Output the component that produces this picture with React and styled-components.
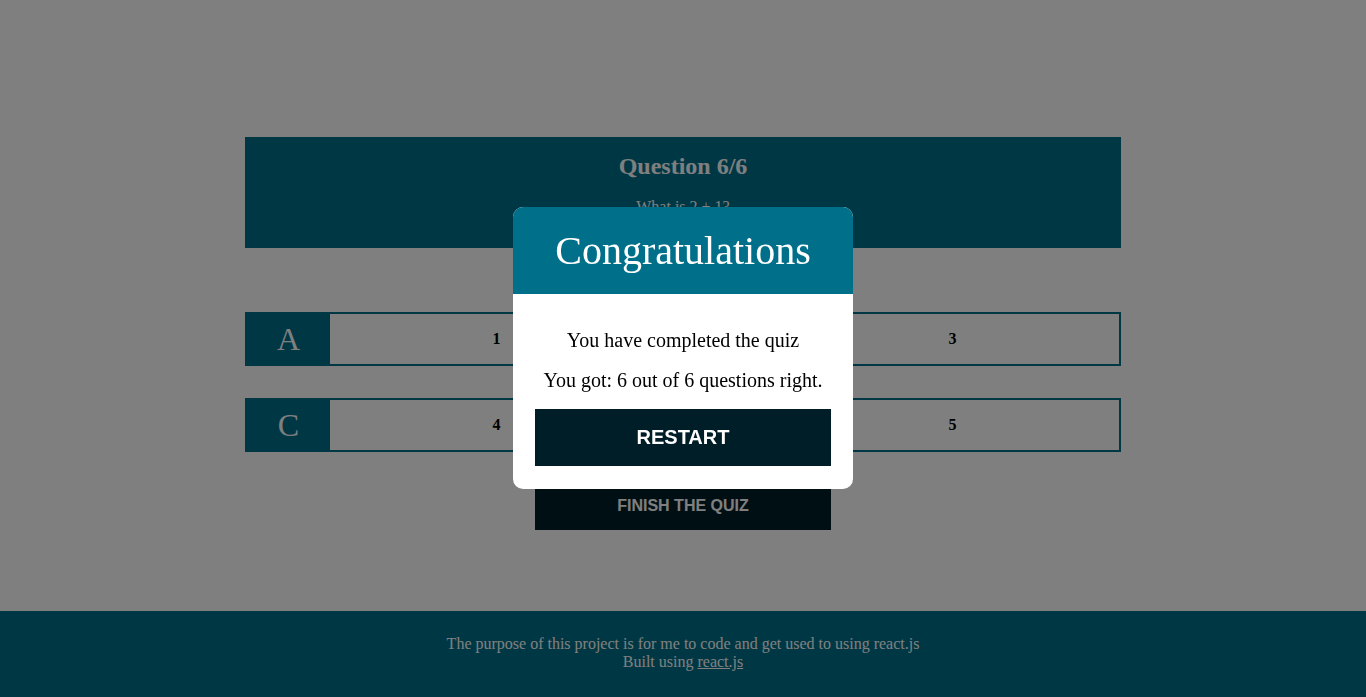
import styled, { createGlobalStyle } from 'styled-components';

const teal = '#006f89';

const GlobalStyle = createGlobalStyle`
  html, body {
    margin: 0;
    padding: 0;
    background: #ffffff;
    font-family: 'Liberation Serif', 'Times New Roman', serif;
  }
`;

const Page = styled.div`
  min-height: 697px;
  display: flex;
  flex-direction: column;
`;

const Main = styled.main`
  flex: 1;
  display: flex;
  flex-direction: column;
  align-items: center;
  padding-top: 137px;
`;

const QuestionBox = styled.section`
  width: 876px;
  height: 111px;
  box-sizing: border-box;
  background: ${teal};
  color: #ffffff;
  display: flex;
  flex-direction: column;
  align-items: center;
  padding-top: 15px;
`;

const QuestionTitle = styled.h2`
  margin: 0;
  font-size: 24px;
  line-height: 28px;
  font-weight: bold;
`;

const QuestionText = styled.p`
  margin: 18px 0 0;
  font-size: 16px;
  line-height: 18px;
`;

const Answers = styled.div`
  width: 876px;
  margin-top: 64px;
  display: grid;
  grid-template-columns: 420px 420px;
  justify-content: space-between;
  row-gap: 32px;
`;

const Answer = styled.button`
  height: 54px;
  display: flex;
  padding: 0;
  border: 2px solid ${teal};
  background: #ffffff;
  font-family: inherit;
  cursor: pointer;
`;

const Letter = styled.span`
  width: 85px;
  margin: -2px 0 -2px -2px;
  background: ${teal};
  color: #ffffff;
  font-size: 32px;
  display: flex;
  align-items: center;
  justify-content: center;
  padding-left: 2px;
  box-sizing: border-box;
`;

const AnswerText = styled.span`
  flex: 1;
  display: flex;
  align-items: center;
  justify-content: center;
  font-size: 16px;
  font-weight: bold;
  color: #000000;
`;

const DarkButton = styled.button`
  width: 296px;
  height: ${(p) => p.$height || '57px'};
  border: none;
  background: #001e28;
  color: #ffffff;
  font-family: 'Liberation Sans', Arial, sans-serif;
  font-weight: bold;
  font-size: ${(p) => p.$size || '16px'};
  text-transform: uppercase;
  cursor: pointer;
`;

const FinishWrap = styled.div`
  margin-top: 30px;
`;

const Footer = styled.footer`
  height: 86px;
  margin-top: 81px;
  background: ${teal};
  color: #ffffff;
  display: flex;
  flex-direction: column;
  align-items: center;
  justify-content: center;
  font-size: 16px;
  line-height: 18px;
  padding-bottom: 2px;
  box-sizing: border-box;

  a {
    color: #ffffff;
  }
`;

const Overlay = styled.div`
  position: fixed;
  inset: 0;
  padding-bottom: 1px;
  background: rgba(0, 0, 0, 0.5);
  display: flex;
  align-items: center;
  justify-content: center;
`;

const Modal = styled.div`
  width: 340px;
  background: #ffffff;
  border-radius: 10px;
  overflow: hidden;
`;

const ModalHeader = styled.div`
  height: 87px;
  background: #00708a;
  color: #ffffff;
  display: flex;
  align-items: center;
  justify-content: center;
  font-size: 40px;
`;

const ModalBody = styled.div`
  padding: 34px 22px 23px;
  display: flex;
  flex-direction: column;
  align-items: center;
  font-size: 20px;
  line-height: 24px;
  color: #000000;
`;

const ModalLine = styled.p`
  margin: 0 0 ${(p) => p.$gap || '16px'};
`;

const answers = [
  { letter: 'A', text: '1' },
  { letter: 'B', text: '3' },
  { letter: 'C', text: '4' },
  { letter: 'D', text: '5' },
];

export default function App() {
  return (
    <>
      <GlobalStyle />
      <Page>
        <Main>
          <QuestionBox>
            <QuestionTitle>Question 6/6</QuestionTitle>
            <QuestionText>What is 2 + 1?</QuestionText>
          </QuestionBox>
          <Answers>
            {answers.map((a) => (
              <Answer key={a.letter}>
                <Letter>{a.letter}</Letter>
                <AnswerText>{a.text}</AnswerText>
              </Answer>
            ))}
          </Answers>
          <FinishWrap>
            <DarkButton $height="48px">Finish the quiz</DarkButton>
          </FinishWrap>
        </Main>
        <Footer>
          <div>The purpose of this project is for me to code and get used to using react.js</div>
          <div>
            Built using <a href="#">react.js</a>
          </div>
        </Footer>
      </Page>
      <Overlay>
        <Modal>
          <ModalHeader>Congratulations</ModalHeader>
          <ModalBody>
            <ModalLine>You have completed the quiz</ModalLine>
            <ModalLine $gap="17px">You got: 6 out of 6 questions right.</ModalLine>
            <DarkButton $size="20px">Restart</DarkButton>
          </ModalBody>
        </Modal>
      </Overlay>
    </>
  );
}
